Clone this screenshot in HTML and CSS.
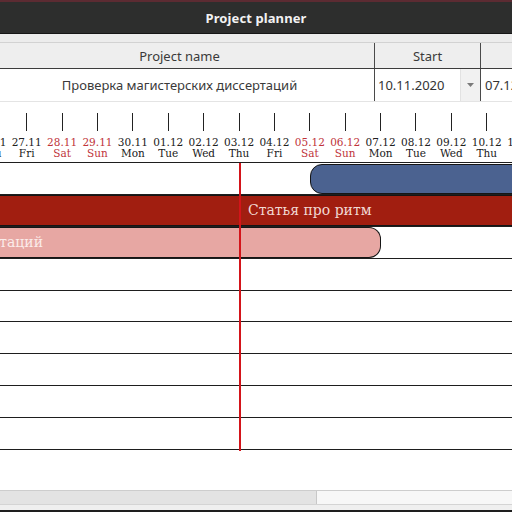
FILE: index.html
```html
<!DOCTYPE html>
<html>
<head>
<meta charset="utf-8">
<link rel="stylesheet" href="styles.css">
</head>
<body>
<div class="window">
  <div class="topline"></div>
  <div class="titlebar">Project planner</div>
  <div class="tablearea">
    <div class="trow thead">
      <div class="cell c-name">Project name</div>
      <div class="cell c-date">Start</div>
      <div class="cell c-end"></div>
    </div>
    <div class="trow tbody">
      <div class="cell c-name">Проверка магистерских диссертаций</div>
      <div class="cell c-date combo">
        <span class="combo-text">10.11.2020</span>
        <span class="combo-btn"><svg width="7" height="4" viewBox="0 0 7 4"><path d="M0 0h7L3.5 4z" fill="#7a7a7a"/></svg></span>
      </div>
      <div class="cell c-end"><span class="combo-text">07.12.2020</span></div>
    </div>
  </div>
  <div class="chart">
    <div class="scale">
      <div class="day"><i></i><b>26.11</b><b>Thu</b></div>
      <div class="day"><i></i><b>27.11</b><b>Fri</b></div>
      <div class="day we"><i></i><b>28.11</b><b>Sat</b></div>
      <div class="day we"><i></i><b>29.11</b><b>Sun</b></div>
      <div class="day"><i></i><b>30.11</b><b>Mon</b></div>
      <div class="day"><i></i><b>01.12</b><b>Tue</b></div>
      <div class="day"><i></i><b>02.12</b><b>Wed</b></div>
      <div class="day"><i></i><b>03.12</b><b>Thu</b></div>
      <div class="day"><i></i><b>04.12</b><b>Fri</b></div>
      <div class="day we"><i></i><b>05.12</b><b>Sat</b></div>
      <div class="day we"><i></i><b>06.12</b><b>Sun</b></div>
      <div class="day"><i></i><b>07.12</b><b>Mon</b></div>
      <div class="day"><i></i><b>08.12</b><b>Tue</b></div>
      <div class="day"><i></i><b>09.12</b><b>Wed</b></div>
      <div class="day"><i></i><b>10.12</b><b>Thu</b></div>
      <div class="day"><i></i><b>11.12</b><b>Fri</b></div>
    </div>
    <div class="rows">
      <div class="grow"><div class="bar bar-blue"></div></div>
      <div class="grow"><div class="bar bar-red"><span class="bar-label red-label">Статья про ритм</span></div></div>
      <div class="grow"><div class="bar bar-pink"><span class="bar-label pink-label">Проверка магистерских диссертаций</span></div></div>
      <div class="grow"></div>
      <div class="grow"></div>
      <div class="grow"></div>
      <div class="grow"></div>
      <div class="grow"></div>
      <div class="grow"></div>
      <div class="now"></div>
    </div>
    <div class="chart-empty"></div>
    <div class="hscroll"><div class="handle"></div></div>
    <div class="footer"></div>
  </div>
</div>
</body>
</html>
```

FILE: styles.css
```css
html, body {
  margin: 0;
  padding: 0;
  width: 512px;
  height: 512px;
  overflow: hidden;
  background: #ffffff;
}
.window {
  width: 512px;
  height: 512px;
  overflow: hidden;
  display: flex;
  flex-direction: column;
  font-family: "Noto Sans", "DejaVu Sans", sans-serif;
}
.topline {
  height: 2px;
  background: #5c2b32;
}
.titlebar {
  height: 31px;
  background: #2d2e2d;
  border-bottom: 1px solid #161616;
  color: #f2f2f2;
  font-weight: bold;
  font-size: 13px;
  display: flex;
  align-items: center;
  justify-content: center;
  letter-spacing: 0.1px;
}
.tablearea {
  background: #ececec;
  padding-top: 8px;
  height: 68px;
  box-sizing: border-box;
  border-bottom: 1px solid #d6d6d6;
}
.trow {
  display: flex;
  margin-left: -15px;
  width: 600px;
}
.thead {
  height: 27px;
  border-top: 1px solid #d2d2d2;
  border-bottom: 1px solid #3c3c3c;
  background: #eeeeee;
  box-sizing: border-box;
}
.tbody {
  height: 33px;
  background: #ffffff;
  border-bottom: 1px solid #d8d8d8;
  box-sizing: border-box;
}
.cell {
  font-size: 13px;
  color: #3a3a3a;
  display: flex;
  align-items: center;
  justify-content: center;
  box-sizing: border-box;
}
.c-name {
  width: 390px;
  border-right: 1px solid #4a4a4a;
}
.c-date {
  width: 106px;
  border-right: 1px solid #4a4a4a;
}
.c-end {
  flex: 1;
  justify-content: flex-start;
}
.combo {
  justify-content: space-between;
  align-items: stretch;
}
.combo-text {
  display: flex;
  align-items: center;
  padding-left: 3px;
  color: #333;
}
.c-end .combo-text {
  padding-left: 4px;
}
.combo-btn {
  width: 19px;
  background: #f1f1f1;
  border-left: 1px solid #e2e2e2;
  display: flex;
  align-items: center;
  justify-content: center;
}
.chart {
  flex: 1;
  display: flex;
  flex-direction: column;
  background: #ffffff;
  padding-top: 9px;
  border-top: 1px solid #e4e4e4;
  margin-top: -1px;
}
.scale {
  display: flex;
  margin-left: -26.4px;
  height: 52px;
  border-bottom: 1px solid #1e1e1e;
  box-sizing: border-box;
  background: #ffffff;
}
.day {
  flex: 0 0 35.4px;
  width: 35.4px;
  display: flex;
  flex-direction: column;
  align-items: center;
  font-family: "DejaVu Serif", serif;
  font-size: 10.5px;
  color: #202020;
}
.day i {
  display: block;
  width: 1px;
  height: 18px;
  margin-top: 2px;
  background: #222;
}
.day b {
  font-weight: normal;
  line-height: 11px;
  white-space: nowrap;
}
.day b:first-of-type {
  margin-top: 6px;
}
.day.we {
  color: #c0333a;
}
.rows {
  position: relative;
}
.grow {
  position: relative;
  height: 31.9px;
  border-bottom: 1px solid #1e1e1e;
  box-sizing: border-box;
  overflow: hidden;
}
.bar {
  position: absolute;
  top: 0;
  bottom: 0;
  box-sizing: border-box;
  border: 1.5px solid #151515;
  display: flex;
  align-items: center;
  overflow: hidden;
}
.bar-blue {
  left: 310px;
  right: -30px;
  background: #4b6290;
  border-radius: 12px 0 0 12px;
  top: 1px;
}
.bar-red {
  left: -20px;
  right: -20px;
  background: #a11e10;
  border-left: none;
  border-right: none;
}
.bar-pink {
  left: -30px;
  width: 411px;
  background: #e7a7a3;
  border-radius: 0 12px 12px 0;
  border-left: none;
}
.bar-label {
  position: absolute;
  font-family: "DejaVu Serif", serif;
  font-size: 14px;
  white-space: nowrap;
}
.red-label {
  left: 268px;
  color: #f1d9d3;
}
.pink-label {
  right: 337px;
  color: #fbecea;
}
.now {
  position: absolute;
  left: 239px;
  top: 0;
  bottom: -1px;
  width: 2px;
  background: #d3141a;
}
.chart-empty {
  height: 40px;
}
.hscroll {
  height: 13px;
  border-top: 1px solid #cdcdcd;
  border-bottom: 1px solid #d4d4d4;
  background: #f7f7f7;
  display: flex;
}
.handle {
  width: 316px;
  background: #e3e3e3;
  border-right: 1px solid #c8c8c8;
}
.footer {
  flex: 1;
  background: #efefef;
  border-bottom: 2px solid #1e1e1e;
}
```
